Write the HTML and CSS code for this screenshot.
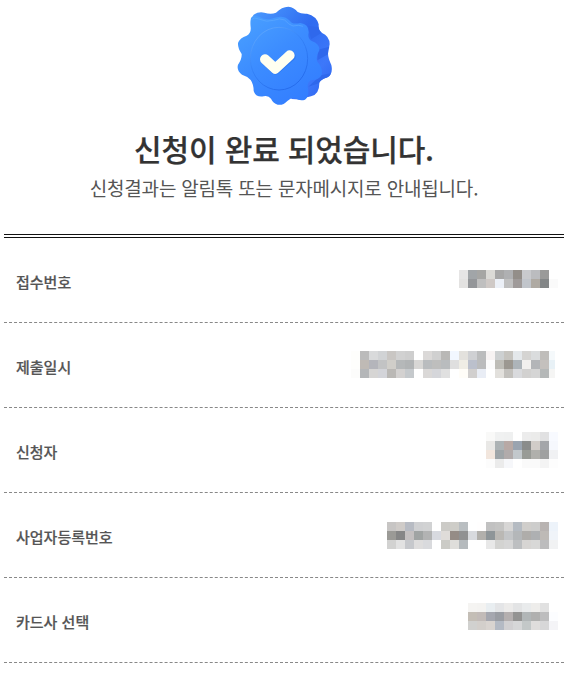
FILE: index.html
```html
<!DOCTYPE html>
<html lang="ko">
<head>
    <meta charset="UTF-8">
    <meta name="viewport" content="width=device-width, initial-scale=1">
    <title>신청 완료</title>
    <link rel="stylesheet" href="styles.css">
</head>
<body>

	<section class="complete">
		<svg class="badge" viewBox="-3 0 360 336" width="120" height="112">
			<defs>
				<linearGradient id="side" x1="0" y1="0" x2="1" y2="1">
					<stop offset="0" stop-color="#4b9cff"/>
					<stop offset=".45" stop-color="#2f6bf0"/>
					<stop offset=".75" stop-color="#3d78fa"/>
					<stop offset="1" stop-color="#2b61ee"/>
				</linearGradient>
				<linearGradient id="face" x1="0" y1="0" x2=".7" y2="1">
					<stop offset="0" stop-color="#4ba2ff"/>
					<stop offset=".5" stop-color="#3c8cff"/>
					<stop offset="1" stop-color="#337eff"/>
				</linearGradient>
				<linearGradient id="rim" x1="0" y1="0" x2=".6" y2="1">
					<stop offset="0" stop-color="#6ab2ff"/>
					<stop offset=".5" stop-color="#3583f8"/>
					<stop offset="1" stop-color="#256cec"/>
				</linearGradient>
			</defs>
			<path fill="url(#side)" d="M84 46Q98 34 118 38Q138 44 153 38Q170 20 190 20Q208 22 218 36Q228 42 246 41Q275 48 281 73Q280 91 290 98Q314 108 314 133Q310 150 309 160Q309 174 319 195Q325 220 308 232Q289 238 283 247Q284 283 258 289Q246 290 235 299L200 297Z"/>
			<path fill="#2f68ec" d="M250 78L280 81Q281 92 290 98L258 118ZM279 149L313 140Q308 150 309 163L277 181ZM288 226L318 220Q314 231 304 233Q285 239 282 250L250 260Z"/>
			<path fill="url(#face)" d="M78 54Q84 43 101 50Q125 62 144 55Q164 46 182 53Q193 59 200 68Q210 73 226 69Q252 72 251 98Q247 115 260 123Q285 132 283 151Q271 171 277 185Q294 204 290 224Q284 239 261 240Q247 244 248 261Q255 287 240 299Q225 304 211 295Q200 291 188 302Q174 317 158 314Q144 309 138 296Q130 286 116 289Q92 293 86 273Q86 253 77 240Q68 229 51 224Q34 212 39 194Q51 177 50 162Q38 145 39 129Q45 113 65 107Q79 99 77 82Q75 66 78 54Z"/>
			<path fill="none" stroke="#65b0ff" stroke-width="3" opacity=".5" d="M80 58Q88 51 101 57Q125 68 146 61Q164 53 179 60Q192 75 204 78Q222 73 234 79"/>
			<ellipse cx="162" cy="176" rx="86" ry="94" fill="none" stroke="url(#rim)" stroke-width="3"/>
			<path fill="none" stroke="#2874ed" stroke-width="28" stroke-linecap="round" stroke-linejoin="round" opacity=".7" d="M121 181L152 209L198 169"/>
			<path fill="none" stroke="#fffff0" stroke-width="30" stroke-linecap="round" stroke-linejoin="round" d="M120 178L151 206L194 166"/>
		</svg>
		<h1>신청이 완료 되었습니다.</h1>
		<p>신청결과는 알림톡 또는 문자메시지로 안내됩니다.</p>
	</section>

	<ul class="info">
		<li><span>접수번호</span><div class="mask" data-cells="e6e5e5 a1a5a8 a6a6a4 dbdad6 a7a7a7 afb0b2 938e89 c9cacd bbbcbf 9a9a99 ffffff/e3e2e1 949699 bfbfbf cfc9c6 ecf0f7 c0c0c0 9f9a99 c1c5cb afaaa3 838687 fafafa"></div></li>
		<li><span>제출일시</span><div class="mask" data-cells="fefefc bbbbbb d9dadb d1d3d5 c9c6c3 d1d1d1 cecece ffffff dbd9d8 d0d0d0 b9b8b6 f2f7ff e3e1dd cfd0d3 bbbcbd f7f3f3 cdd0d1 c6c4bf e4e8eb d5d4d2 dadcdd bfbdba f5f9fb/fefefc bfbab5 b4b5bb c2c3c4 d0cec9 b5b8b9 b1b4b5 d8d7d5 b9bcbe bebebd b9bcbe dfdfdf efede5 bbc0cc bbbcbd fcfcfc bebdb7 9c9891 adb4b9 f2f0ee b3b5b8 c4c0bd e8f1f6/fcfcfb b4b6b8 d6d5d4 d3d4d9 bab8b5 d3d1d0 c5c9cc ffffff dad8d7 d5d6da e0e0e0 ffffff fffdf8 d1cfce e9edf5 ffffff e2e0dc c3c1bd d9dadd d2d1d0 d5d5d5 b5b8b8 f5f5f4"></div></li>
		<li><span>신청자</span><div class="mask" data-cells="f9f9f8 f0f1f1 eff0f0 ffffff ececec ebebea e1e1e2 f8faff/e9e8e6 adb3b5 b8a9a5 9aa4b0 8a8c8b d1ccc8 a4a6aa f6f8fd/f2e6dd 9fa5a8 b1abab c2c8cc 989b96 b0b0ac 9fa0a0 f0f1f3/fcfcfc ebebeb f6f7fa ffffff fafafa fafafa f4f4f4 fdfdfd"></div></li>
		<li><span>사업자등록번호</span><div class="mask" data-cells="c7c5c4 cfcbc8 b7bbc3 cfd0d2 d1d2d3 ffffff cccbc7 cecdc8 b9bec1 ffffff fffefe c1c1c1 c4c4c3 d7d6d5 b5bbc2 d0cecb cdcdcc b8b3b1 edf3fa/9b9a96 868686 c4c0c0 a0a4a3 b2b3b3 d8dae0 dfdcd9 958c86 909192 d8dade b2b0ac 8e9598 bab8b4 c3c5c7 b4b7b9 afadaa aeb0b2 bebab6 f0f4f9/d2d2d1 e2e2e2 c6c8cc dedddd d9dadd ffffff cbcbc6 dfdedb b5babd ffffff ffffff e8e8e8 d3d3d1 d6d6d6 bdbfc1 d7d5d3 d8d8d7 bcbcbd f1f2f3"></div></li>
		<li><span>카드사 선택</span><div class="mask" data-cells="f5f4f2 f4f3f1 e9eef1 e4e5e7 ecebea e3e4e5 e9ebec eeedeb e1e1e1 ffffff/c4beb6 c2bbb8 a5a7af 9a9da3 b4afaf 939392 b1b6b7 b0b0af bdbdbe fcfdff/d1d1cf d3cfcb d9d4d0 b4bac4 d1d0d2 d6d7d8 c3c8c8 dfdddc d7d7d8 f4f4f7"></div></li>
	</ul>

	<script>

		var OMask = document.querySelectorAll('.mask');

		for (var i = 0; i < OMask.length; i++) {
			var rows = OMask[i].getAttribute('data-cells').split('/');
			for (var j = 0; j < rows.length; j++) {
				var row = document.createElement('div'),
					cells = rows[j].split(' ');
				row.className = 'mask-row';
				for (var k = 0; k < cells.length; k++) {
					var cell = document.createElement('i');
					cell.style.background = '#' + cells[k];
					row.appendChild(cell);
				}
				OMask[i].appendChild(row);
			}
		}

	</script>

</body>
</html>
```
FILE: styles.css
```css
html,body {
	margin:0;
	padding:0;
	background:#fff;
	font-family:"Noto Sans CJK KR","Noto Sans",sans-serif;
}
.complete {
	margin:0 6px 0 4px;
	text-align:center;
}
.badge {
	display:block;
	margin:0 auto;
}
.complete h1 {
	margin:14px 0 0;
	height:44px;
	line-height:44px;
	font-size:30px;
	font-weight:500;
	letter-spacing:-.15px;
	color:#333;
	-webkit-text-stroke:.25px #333;
}
.complete p {
	margin:4px 0 0;
	height:28px;
	line-height:28px;
	font-size:19px;
	letter-spacing:-.2px;
	color:#555;
}
.info {
	list-style:none;
	margin:32px 6px 0 4px;
	padding:0;
	border-top:4px double #111;
}
.info li {
	display:flex;
	justify-content:space-between;
	align-items:flex-start;
	height:84px;
	padding:0 6px 0 12px;
	border-bottom:1px dashed #888;
}
.info span {
	line-height:88px;
	font-size:15px;
	font-weight:500;
	color:#555;
	-webkit-text-stroke:.2px #555;
}
.mask {
	margin-top:28px;
}
.info li:first-child .mask {
	margin-top:32px;
}
.info li:nth-child(3) .mask {
	margin-top:24px;
}
.info li:nth-child(4) .mask {
	margin-top:29px;
}
.info li:nth-child(5) .mask {
	margin-top:25px;
}
.mask-row {
	display:flex;
}
.mask-row i {
	width:9px;
	height:9px;
}
.info li:nth-child(2) .mask-row i:last-child {
	width:6px;
	margin-right:3px;
}
```
